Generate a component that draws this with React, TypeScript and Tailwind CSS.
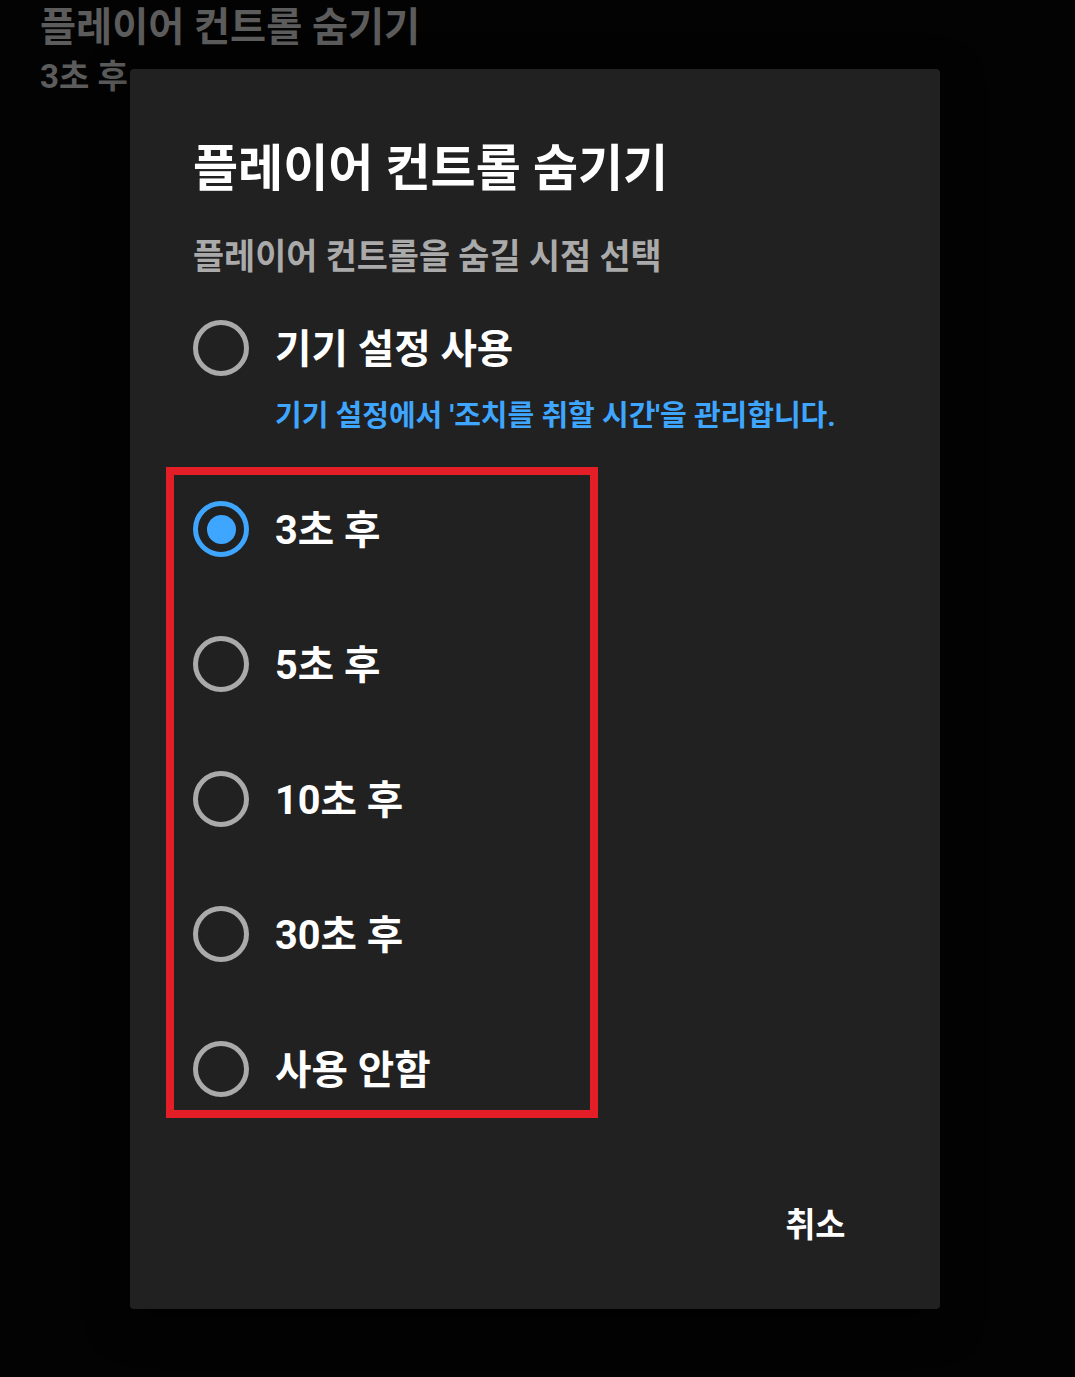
import React from 'react'

// -------------------------------------------------------------------
// Text helper: the device font runs a little narrower than Noto
// -------------------------------------------------------------------

function Narrow({
  children,
  className = 'origin-left scale-x-[0.98]',
}: {
  children: React.ReactNode
  className?: string
}) {
  return (
    <span className={`inline-block whitespace-nowrap ${className}`}>
      {children}
    </span>
  )
}

// -------------------------------------------------------------------
// Radio option
// -------------------------------------------------------------------

function RadioOption({ label, checked = false }: { label: string; checked?: boolean }) {
  return (
    <div className="flex h-14 items-center gap-[26px]">
      {checked ? (
        <div className="flex h-14 w-14 shrink-0 items-center justify-center rounded-full border-[5px] border-[#3ea6ff]">
          <div className="h-[29px] w-[29px] rounded-full bg-[#3ea6ff]" />
        </div>
      ) : (
        <div className="h-14 w-14 shrink-0 rounded-full border-[5px] border-[#aaaaaa]" />
      )}
      <div className="pt-[3px] text-[40px] font-bold leading-none text-white">
        <Narrow className="origin-left scale-x-[0.99]">{label}</Narrow>
      </div>
    </div>
  )
}

const OPTIONS = ['3초 후', '5초 후', '10초 후', '30초 후', '사용 안함']

export default function App() {
  return (
    <div
      className="relative h-[1377px] w-full overflow-hidden bg-[#030303]"
      style={{ fontFamily: 'Roboto, "Noto Sans CJK KR", sans-serif' }}
    >
      {/* page behind the dialog */}
      <div className="pl-10 pt-2 font-bold text-[#5c5c5c]">
        <div className="text-[40px] leading-none">
          <Narrow>플레이어 컨트롤 숨기기</Narrow>
        </div>
        <div className="mt-3 text-[33px] leading-none">
          <Narrow className="origin-left">3초 후</Narrow>
        </div>
      </div>

      {/* dialog */}
      <div className="absolute left-[130px] top-[69px] flex w-[810px] flex-col rounded-[4px] bg-[#212121] pb-[67px] pl-[63px] pr-[94px] pt-[75px] shadow-[0_12px_40px_rgba(0,0,0,0.6)]">
        <h2 className="text-[50px] font-bold leading-none text-white">
          <Narrow>플레이어 컨트롤 숨기기</Narrow>
        </h2>
        <p className="mt-[46px] text-[35px] font-bold leading-none text-[#aaaaaa]">
          <Narrow className="origin-left scale-x-[0.965]">플레이어 컨트롤을 숨길 시점 선택</Narrow>
        </p>

        <div className="mt-[45px]">
          <RadioOption label="기기 설정 사용" />
        </div>
        <p className="ml-[82px] mt-[26px] text-[29px] font-bold leading-none text-[#3ea6ff]">
          <Narrow className="origin-left">기기 설정에서 '조치를 취할 시간'을 관리합니다.</Narrow>
        </p>

        <div className="ml-[-27px] mt-9 flex h-[651px] w-[432px] flex-col gap-[79px] border-[8px] border-[#e41e26] pl-[19px] pt-[26px]">
          {OPTIONS.map((o, i) => (
            <RadioOption key={o} label={o} checked={i === 0} />
          ))}
        </div>

        <div className="mt-[90px] flex justify-end">
          <button className="text-[34px] font-bold leading-none text-white">
            <Narrow className="origin-right scale-x-[0.965]">취소</Narrow>
          </button>
        </div>
      </div>
    </div>
  )
}
